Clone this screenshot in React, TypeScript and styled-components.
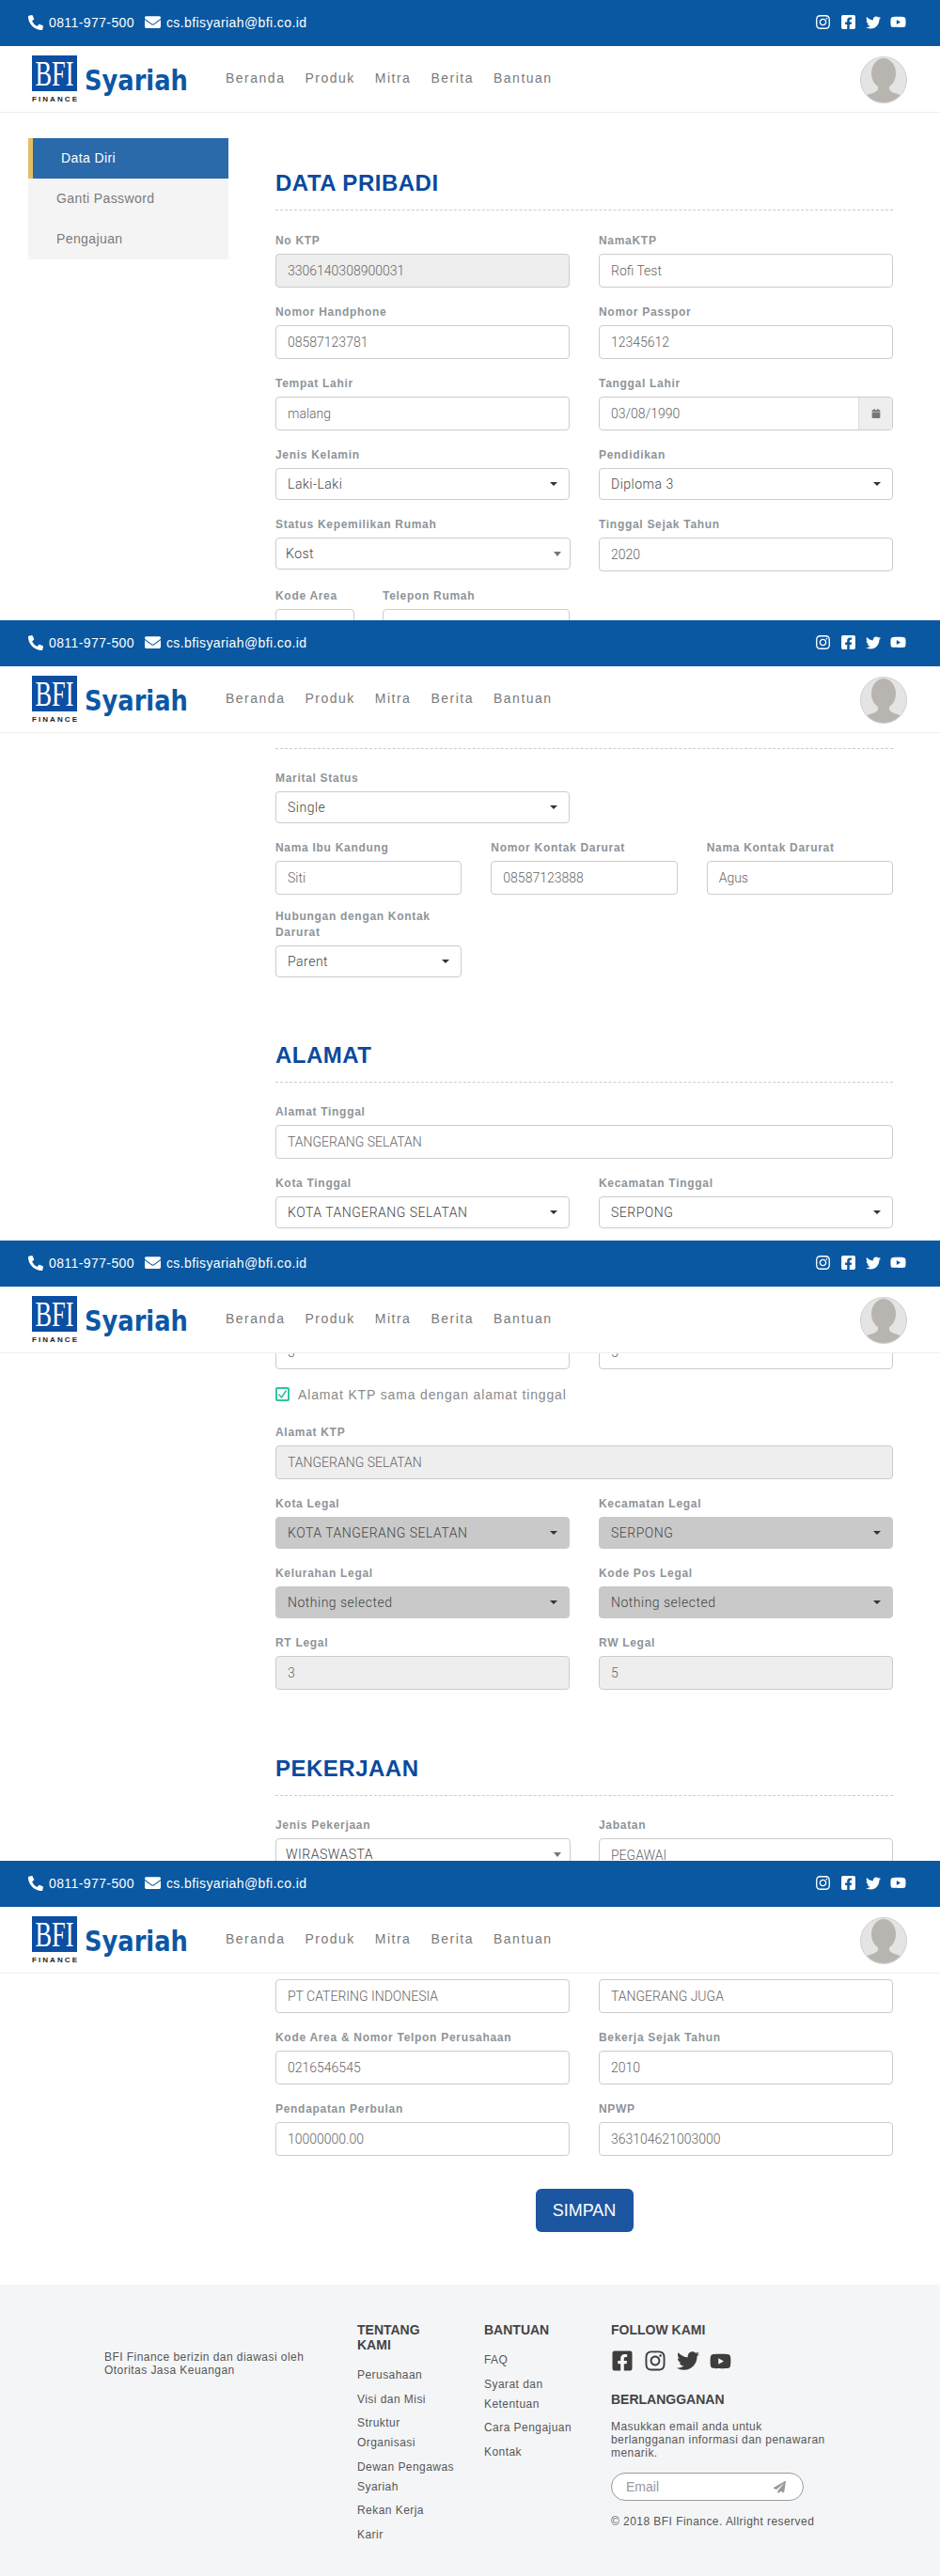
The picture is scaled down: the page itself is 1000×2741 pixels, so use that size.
import React from 'react';
import styled, { createGlobalStyle } from 'styled-components';
import {
  FaCalendar, FaEnvelope, FaFacebookSquare, FaInstagram,
  FaPaperPlane, FaPhoneAlt, FaTwitter, FaYoutube,
} from 'react-icons/fa';

const GlobalStyle = createGlobalStyle`
  html, body {
    margin: 0;
    padding: 0;
    background: #fff;
    font-family: "Liberation Sans", Arial, sans-serif;
  }
  * { box-sizing: border-box; }
`;

const Logo = () => (
  <svg width="170" height="50" viewBox="0 0 170 50" style={{ marginRight: 36, flexShrink: 0 }}>
    <rect x="0" y="0" width="48" height="38" fill="#0b4ea2" />
    <text x="3.5" y="32" fontFamily="'Liberation Serif', serif" fontSize="37" fill="#fff" textLength="41" lengthAdjust="spacingAndGlyphs">BFI</text>
    <text x="0" y="48.5" fontFamily="'Liberation Sans', sans-serif" fontWeight="700" fontSize="8" fill="#222" textLength="48">FINANCE</text>
    <text transform="translate(56 37) scale(0.83 1)" fontFamily="'DejaVu Sans', sans-serif" fontWeight="700" fontSize="31" fill="#0b57a4">Syariah</text>
  </svg>
);

const AvatarIcon = () => (
  <svg width="50" height="50" viewBox="0 0 50 50">
    <defs>
      <clipPath id="avatar-clip">
        <circle cx="25" cy="25" r="24" />
      </clipPath>
    </defs>
    <circle cx="25" cy="25" r="24.5" fill="#e4e4e4" stroke="#cfcfcf" />
    <g clipPath="url(#avatar-clip)" fill="#b8b5b0">
      <ellipse cx="25" cy="18" rx="13" ry="16" />
      <path d="M19 28 h12 v7 q1 3 9 5 q6 2 6 10 H4 q0-8 6-10 q8-2 9-5 z" />
    </g>
  </svg>
);

const SiteHeader: React.FC<{ top: number }> = ({ top }) => (
  <HeaderWrap $top={top}>
    <TopBar>
      <Contacts>
        <Contact><FaPhoneAlt size={16} />0811-977-500</Contact>
        <Contact><FaEnvelope size={17} />cs.bfisyariah@bfi.co.id</Contact>
      </Contacts>
      <TopSocial>
        <FaInstagram size={17} />
        <FaFacebookSquare size={17} />
        <FaTwitter size={16} />
        <FaYoutube size={17} />
      </TopSocial>
    </TopBar>
    <NavBar>
      <Logo />
      <NavMenu>
        <NavItem>Beranda</NavItem>
        <NavItem>Produk</NavItem>
        <NavItem>Mitra</NavItem>
        <NavItem>Berita</NavItem>
        <NavItem>Bantuan</NavItem>
      </NavMenu>
      <Avatar><AvatarIcon /></Avatar>
    </NavBar>
  </HeaderWrap>
);

type FieldProps = { label?: string; value?: string; disabled?: boolean };

const TextField: React.FC<FieldProps> = ({ label, value, disabled }) => (
  <Field>
    <Label>{label}</Label>
    <InputBox $disabled={disabled}>{value}</InputBox>
  </Field>
);

const SelectField: React.FC<FieldProps & { native?: boolean }> = ({ label, value, disabled, native }) => (
  <Field>
    <Label>{label}</Label>
    <SelectBox $disabled={disabled} $native={native}>
      {value}
      <Caret $native={native} />
    </SelectBox>
  </Field>
);

const App: React.FC = () => (
  <Page>
    <GlobalStyle />
    {[0, 660, 1320, 1980].map(top => <SiteHeader key={top} top={top} />)}

    <Main>
      <SideMenu>
        <SideItemActive>Data Diri</SideItemActive>
        <SideItem>Ganti Password</SideItem>
        <SideItem>Pengajuan</SideItem>
      </SideMenu>

      <Form>
        <SectionTitle>DATA PRIBADI</SectionTitle>
        <Dashed $bottom={24} />
        <TwoCols>
          <TextField label="No KTP" value="3306140308900031" disabled />
          <TextField label="NamaKTP" value="Rofi Test" />
          <TextField label="Nomor Handphone" value="08587123781" />
          <TextField label="Nomor Passpor" value="12345612" />
          <TextField label="Tempat Lahir" value="malang" />
          <Field>
            <Label>Tanggal Lahir</Label>
            <InputBox>
              03/08/1990
              <CalendarAddon><FaCalendar size={10} /></CalendarAddon>
            </InputBox>
          </Field>
          <SelectField label="Jenis Kelamin" value="Laki-Laki" />
          <SelectField label="Pendidikan" value="Diploma 3" />
          <SelectField label="Status Kepemilikan Rumah" value="Kost" native />
          <TextField label="Tinggal Sejak Tahun" value="2020" />
          <PhoneCols>
            <TextField label="Kode Area" />
            <TextField label="Telepon Rumah" />
          </PhoneCols>
        </TwoCols>

        <Dashed $top={94} />
        <TwoCols>
          <SelectField label="Marital Status" value="Single" />
        </TwoCols>
        <ThreeCols>
          <TextField label="Nama Ibu Kandung" value="Siti" />
          <TextField label="Nomor Kontak Darurat" value="08587123888" />
          <TextField label="Nama Kontak Darurat" value="Agus" />
          <SelectField label="Hubungan dengan Kontak Darurat" value="Parent" />
        </ThreeCols>

        <SectionTitle $top={55}>ALAMAT</SectionTitle>
        <Dashed />
        <TextField label="Alamat Tinggal" value="TANGERANG SELATAN" />
        <TwoCols>
          <SelectField label="Kota Tinggal" value="KOTA TANGERANG SELATAN" />
          <SelectField label="Kecamatan Tinggal" value="SERPONG" />
          <SelectField />
          <SelectField />
          <TextField value="3" />
          <TextField value="5" />
        </TwoCols>
        <CheckRow>
          <CheckBox>
            <svg width="11" height="11" viewBox="0 0 11 11">
              <path d="M1.5 5.5 L4.5 9 L9.5 1.5" fill="none" stroke="#2ec4a0" strokeWidth="1.6" />
            </svg>
          </CheckBox>
          Alamat KTP sama dengan alamat tinggal
        </CheckRow>
        <TextField label="Alamat KTP" value="TANGERANG SELATAN" disabled />
        <TwoCols>
          <SelectField label="Kota Legal" value="KOTA TANGERANG SELATAN" disabled />
          <SelectField label="Kecamatan Legal" value="SERPONG" disabled />
          <SelectField label="Kelurahan Legal" value="Nothing selected" disabled />
          <SelectField label="Kode Pos Legal" value="Nothing selected" disabled />
          <TextField label="RT Legal" value="3" disabled />
          <TextField label="RW Legal" value="5" disabled />
        </TwoCols>

        <SectionTitle $top={53}>PEKERJAAN</SectionTitle>
        <Dashed />
        <TwoCols>
          <SelectField label="Jenis Pekerjaan" value="WIRASWASTA" native />
          <TextField label="Jabatan" value="PEGAWAI" />
          <SelectField />
          <SelectField />
          <TextField value="PT CATERING INDONESIA" />
          <TextField value="TANGERANG JUGA" />
          <TextField label="Kode Area & Nomor Telpon Perusahaan" value="0216546545" />
          <TextField label="Bekerja Sejak Tahun" value="2010" />
          <TextField label="Pendapatan Perbulan" value="10000000.00" />
          <TextField label="NPWP" value="363104621003000" />
        </TwoCols>
        <SubmitWrap>
          <SubmitButton>SIMPAN</SubmitButton>
        </SubmitWrap>
      </Form>
    </Main>

    <Footer>
      <FooterNote>BFI Finance berizin dan diawasi oleh Otoritas Jasa Keuangan</FooterNote>
      <LinkColumn>
        <FooterTitle>TENTANG KAMI</FooterTitle>
        <FooterLinks>
          <li>Perusahaan</li>
          <li>Visi dan Misi</li>
          <li>Struktur Organisasi</li>
          <li>Dewan Pengawas Syariah</li>
          <li>Rekan Kerja</li>
          <li>Karir</li>
        </FooterLinks>
      </LinkColumn>
      <LinkColumn>
        <FooterTitle>BANTUAN</FooterTitle>
        <FooterLinks>
          <li>FAQ</li>
          <li>Syarat dan Ketentuan</li>
          <li>Cara Pengajuan</li>
          <li>Kontak</li>
        </FooterLinks>
      </LinkColumn>
      <FollowColumn>
        <FooterTitle>FOLLOW KAMI</FooterTitle>
        <FooterSocial>
          <FaFacebookSquare size={24} />
          <FaInstagram size={24} />
          <FaTwitter size={24} />
          <FaYoutube size={23} />
        </FooterSocial>
        <FooterTitle>BERLANGGANAN</FooterTitle>
        <SubscribeText>Masukkan email anda untuk berlangganan informasi dan penawaran menarik.</SubscribeText>
        <EmailBox>
          Email
          <FaPaperPlane size={13} />
        </EmailBox>
        <Copyright>© 2018 BFI Finance. Allright reserved</Copyright>
      </FollowColumn>
    </Footer>
  </Page>
);

const Page = styled.div`
  position: relative;
  width: 1000px;
  height: 2741px;
  overflow: hidden;
`;

const HeaderWrap = styled.header<{ $top: number }>`
  position: absolute;
  top: ${p => p.$top}px;
  left: 0;
  right: 0;
  z-index: 10;
  background: #fff;
  border-bottom: 1px solid #eee;
`;

const TopBar = styled.div`
  height: 49px;
  background: #0a58a1;
  color: #fff;
  display: flex;
  align-items: center;
  justify-content: space-between;
  padding: 0 36px 2px 30px;
`;

const Contacts = styled.div`
  display: flex;
  gap: 11px;
`;

const Contact = styled.span`
  display: flex;
  align-items: center;
  gap: 6px;
  font-size: 14px;
  letter-spacing: 0.4px;
`;

const TopSocial = styled.div`
  display: flex;
  align-items: center;
  gap: 10px;
`;

const NavBar = styled.div`
  height: 70px;
  display: flex;
  align-items: center;
  padding: 0 35px 0 34px;
`;

const NavMenu = styled.nav`
  display: flex;
  gap: 21px;
  margin-top: -2px;
`;

const NavItem = styled.a`
  font-size: 14px;
  letter-spacing: 1.5px;
  color: #7a7a7a;
`;

const Avatar = styled.div`
  margin-left: auto;
  margin-top: 2px;
  height: 50px;
`;

const Main = styled.main`
  display: flex;
  align-items: flex-start;
  padding: 147px 50px 0 30px;
  height: 2431px;
`;

const SideMenu = styled.aside`
  width: 213px;
  flex-shrink: 0;
  background: #f4f4f4;
`;

const SideItem = styled.div`
  height: 43px;
  line-height: 43px;
  padding-left: 30px;
  font-size: 14px;
  letter-spacing: 0.4px;
  color: #7a7a7a;
`;

const SideItemActive = styled(SideItem)`
  background: #2a69aa;
  border-left: 5px solid #e3bf62;
  color: #fff;
`;

const Form = styled.section`
  width: 657px;
  margin-left: 50px;
  padding-top: 35px;
`;

const SectionTitle = styled.h2<{ $top?: number }>`
  margin: ${p => p.$top ?? 0}px 0 15px;
  font-size: 24px;
  line-height: 26px;
  font-weight: 700;
  letter-spacing: 0.5px;
  color: #0a4a9e;
`;

const Dashed = styled.div<{ $top?: number; $bottom?: number }>`
  margin: ${p => p.$top ?? 0}px 0 ${p => p.$bottom ?? 23}px;
  border-top: 1px dashed #ccc;
`;

const TwoCols = styled.div`
  display: grid;
  grid-template-columns: 1fr 1fr;
  column-gap: 31px;
  align-items: start;
`;

const ThreeCols = styled.div`
  display: grid;
  grid-template-columns: repeat(3, 1fr);
  column-gap: 31px;
  align-items: start;

  & > div {
    margin-bottom: 15px;
  }
`;

const PhoneCols = styled.div`
  display: grid;
  grid-template-columns: 84px 1fr;
  column-gap: 30px;
`;

const Field = styled.div`
  margin-bottom: 18px;
  min-width: 0;
`;

const Label = styled.label`
  display: block;
  min-height: 17px;
  margin-bottom: 5px;
  font-size: 12px;
  line-height: 17px;
  font-weight: 700;
  letter-spacing: 0.7px;
  color: #8e9499;
`;

const InputBox = styled.div<{ $disabled?: boolean }>`
  position: relative;
  height: 36px;
  line-height: 34px;
  padding: 0 12px;
  font-family: Roboto, "Liberation Sans", sans-serif;
  font-size: 14px;
  font-weight: 300;
  color: #666;
  white-space: nowrap;
  overflow: hidden;
  background: ${p => (p.$disabled ? '#eee' : '#fff')};
  border: 1px solid #ccc;
  border-radius: 4px;
`;

const CalendarAddon = styled.span`
  position: absolute;
  top: 0;
  right: 0;
  bottom: 0;
  width: 36px;
  display: flex;
  align-items: center;
  justify-content: center;
  background: #eee;
  border-left: 1px solid #ddd;
  color: #777;
`;

const SelectBox = styled.div<{ $disabled?: boolean; $native?: boolean }>`
  position: relative;
  height: 34px;
  line-height: 32px;
  padding: 0 ${p => (p.$native ? '10px' : '12px')};
  margin-right: ${p => (p.$native ? '-1px' : '0')};
  font-family: Roboto, "Liberation Sans", sans-serif;
  font-size: 14px;
  font-weight: 300;
  letter-spacing: 0.5px;
  color: #444;
  background: ${p => (p.$disabled ? '#c9c9c9' : '#fff')};
  border: 1px solid ${p => (p.$disabled ? '#c9c9c9' : '#ccc')};
  border-radius: 4px;
`;

const Caret = styled.span<{ $native?: boolean }>`
  position: absolute;
  top: 14px;
  right: ${p => (p.$native ? '9px' : '12px')};
  border-style: solid;
  border-color: ${p => (p.$native ? '#777' : '#333')} transparent transparent;
  border-width: ${p => (p.$native ? '5px 4px 0' : '4px 4px 0')};
`;

const CheckRow = styled.div`
  display: flex;
  align-items: center;
  gap: 9px;
  height: 15px;
  margin: 1px 0 25px;
  font-size: 14px;
  letter-spacing: 0.85px;
  color: #8a8a8a;
`;

const CheckBox = styled.span`
  width: 15px;
  height: 15px;
  display: flex;
  align-items: center;
  justify-content: center;
  border: 2px solid #2ec4a0;
  border-radius: 2px;
`;

const SubmitWrap = styled.div`
  display: flex;
  justify-content: center;
  margin-top: 17px;
`;

const SubmitButton = styled.button`
  width: 104px;
  height: 46px;
  border: 0;
  border-radius: 6px;
  background: #1c55a0;
  color: #fff;
  font-family: inherit;
  font-size: 18px;
`;

const Footer = styled.footer`
  display: flex;
  align-items: flex-start;
  height: 310px;
  padding: 40px 0 0 111px;
  background: #f4f5f7;
  color: #555;
  font-size: 12px;
  letter-spacing: 0.45px;
`;

const FooterNote = styled.p`
  width: 239px;
  margin: 30px 30px 0 0;
  line-height: 14px;
`;

const LinkColumn = styled.div`
  width: 105px;
  margin-right: 30px;
`;

const FollowColumn = styled.div`
  width: 230px;
`;

const FooterTitle = styled.h4`
  margin: 0 0 14px;
  font-size: 14px;
  line-height: 16px;
  font-weight: 700;
  letter-spacing: 0;
  color: #444;
`;

const FooterLinks = styled.ul`
  list-style: none;
  margin: 0;
  padding: 0;
  line-height: 21px;

  li {
    margin-bottom: 4.5px;
  }
`;

const FooterSocial = styled.div`
  display: flex;
  align-items: center;
  gap: 11px;
  height: 24px;
  margin: -1px 0 21px;
  color: #3d3d3d;
`;

const SubscribeText = styled.p`
  margin: 0 0 14px;
  line-height: 14px;
`;

const EmailBox = styled.div`
  display: flex;
  align-items: center;
  justify-content: space-between;
  width: 205px;
  height: 30px;
  padding: 0 18px 0 15px;
  font-size: 14px;
  letter-spacing: 0;
  color: #999;
  background: #fff;
  border: 1px solid #999;
  border-radius: 15px;
`;

const Copyright = styled.div`
  margin-top: 15px;
`;

export default App;
